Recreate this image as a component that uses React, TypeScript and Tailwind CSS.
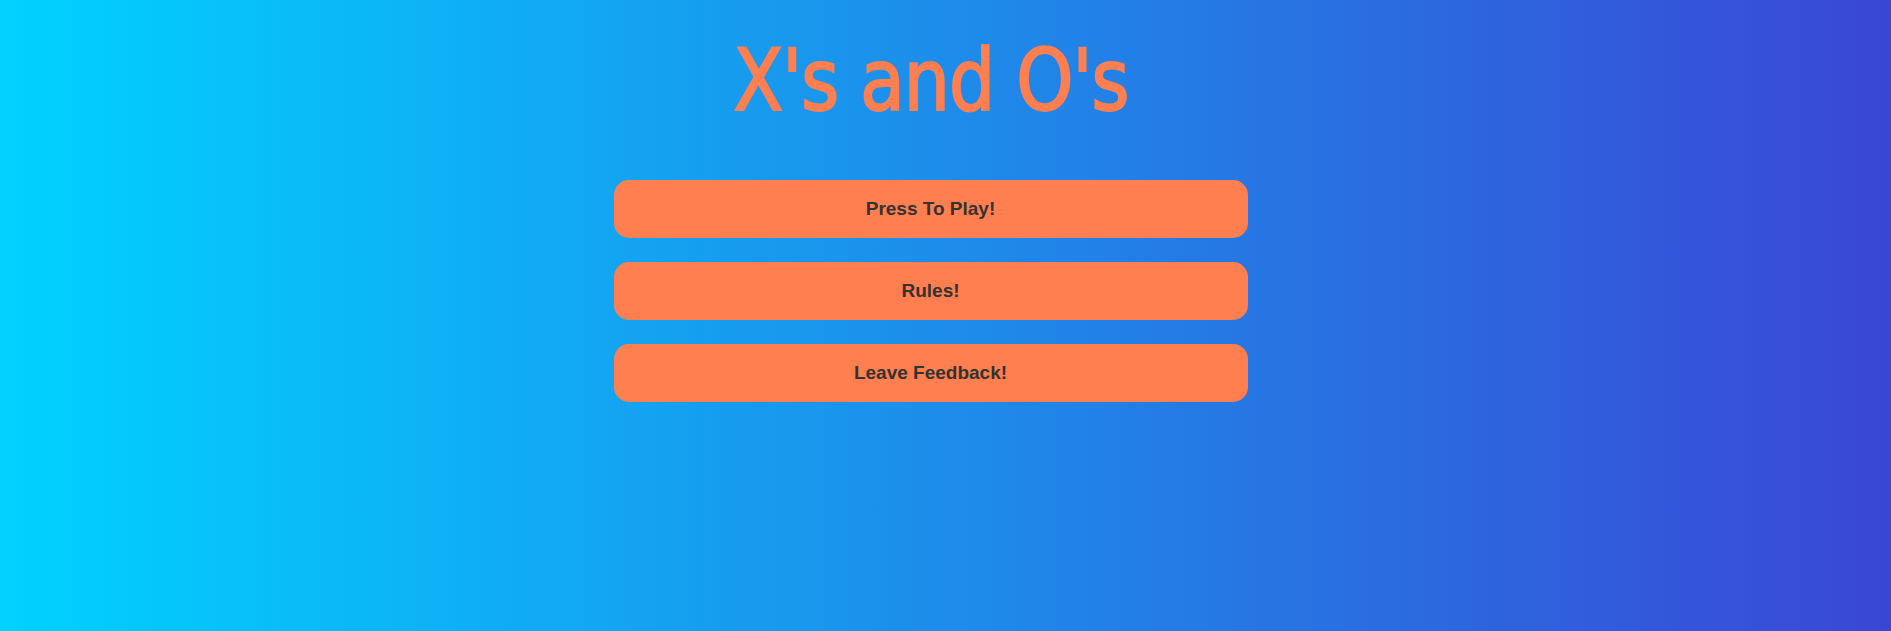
import React from "react";

export default function App() {
  const buttons = ["Press To Play!", "Rules!", "Leave Feedback!"];
  return (
    <div className="w-full h-[631px] bg-[linear-gradient(90deg,#00d2ff_0%,#3a47d5_100%)] flex flex-col items-center pr-[30px]">
      <h1
        className="mt-[38px] text-[85px] leading-[85px] text-[#ff7f50] tracking-[-1px] scale-x-[0.95] [-webkit-text-stroke:2px_#ff7f50]"
        style={{ fontFamily: '"DejaVu Sans Condensed", "DejaVu Sans", sans-serif' }}
      >
        X's and O's
      </h1>
      <div className="mt-[57px] flex flex-col gap-[24px]">
        {buttons.map((b) => (
          <button
            key={b}
            className="w-[634px] h-[58px] rounded-[15px] bg-[#ff7f50] text-[#333333] font-bold text-[19px] flex items-center justify-center"
            style={{ fontFamily: '"Liberation Sans", Arial, sans-serif' }}
          >
            {b}
          </button>
        ))}
      </div>
    </div>
  );
}
